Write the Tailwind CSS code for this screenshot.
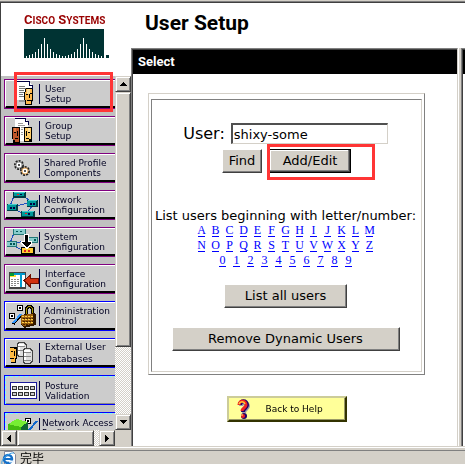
<!DOCTYPE html>
<html lang="en">
<head>
<meta charset="utf-8">
<title>User Setup</title>
<script src="https://cdn.jsdelivr.net/npm/@tailwindcss/browser@4"></script>
</head>
<body class="flex h-screen flex-col overflow-hidden bg-white font-['DejaVu_Sans',sans-serif] text-[13px] text-black">
<div class="h-px shrink-0 bg-[#d4d0c8]"></div>
<div class="flex min-h-0 flex-1 border-t border-[#808080]">
 <div class="flex min-h-0 flex-1 border-t border-[#404040]">

  <!-- Left column: logo and navigation -->
  <div class="relative flex w-[131px] shrink-0 flex-col border-l border-[#404040]">
    <div class="h-[73px] shrink-0 pt-[10px] pl-[23px]">
      <p class="font-['Roboto',sans-serif] text-[13px] leading-[14px] font-bold whitespace-nowrap text-[#990000]">C<span class="text-[10px]">ISCO</span> S<span class="text-[10px]">YSTEMS</span></p>
      <svg class="mt-px h-[29px] w-[86px]" viewBox="0 0 86 29" shape-rendering="crispEdges" aria-hidden="true">
        <path fill="#003333" d="M0 0h80v29H0zM82 26h3v3h-3z"/>
        <path stroke="#fff" d="M2.500 29v-2M5.500 29v-3M8.500 29v-4M11.500 29v-6M14.500 29v-9M17.500 29v-14M20.500 29v-20M23.500 29v-14M26.500 29v-9M29.500 29v-6M32.500 29v-4M35.500 29v-3M38.500 29v-2M41.500 29v-2M44.500 29v-3M47.500 29v-4M50.500 29v-6M53.500 29v-9M56.500 29v-14M59.500 29v-20M62.500 29v-14M65.500 29v-9M68.500 29v-6M71.500 29v-4M74.500 29v-3M77.500 29v-2"/>
      </svg>
    </div>

    <div class="flex min-h-0 flex-1">
      <nav class="flex min-w-0 flex-1 flex-col gap-[7px] overflow-hidden bg-[#c0c0c0] pt-[3px] pl-[3px] text-[9px] leading-[10px] whitespace-nowrap text-[#000022]" aria-label="Main">
        <a href="#" class="flex h-[30px] w-[124px] shrink-0 border border-[#800080]"><span class="flex flex-1 items-center border-t border-l border-white border-b-2 border-b-black bg-[#ccc]">
          <svg class="h-[26px] w-[33px] shrink-0" viewBox="0 0 33 26" shape-rendering="crispEdges" aria-hidden="true"><path fill="#999" d="M13 18h14v3H13z"/><path fill="#fff" d="M11 1h12l4 4v14H11z"/><path fill="none" stroke="#000044" d="M11 .5h12.500v4h3v3"/><path stroke="#777" d="M13 5.500h6M13 7.500h7M13 9.500h5M13 11.500h5M13 13.500h4M13 15.500h5"/><path fill="#000" d="M20 7h6v1h1v12h-1v4h-7v-5h-1v-8h1V8h1z"/><path fill="#ffb84d" d="M20 8h6v11h-1v4h-5v-4h-1v-8h1z"/><path fill="#ffdf9b" d="M21 8h3v5h-3z"/><path fill="#000" d="M20 13h2v1h-2zM24 12h2v1h-2zM23 13h1v4h-1zM21 19h4v1h-4z"/></svg>
          <span class="mr-[5px] h-5 w-px bg-[#000044]"></span><span>User<br>Setup</span></span></a>
        <a href="#" class="flex h-[30px] w-[124px] shrink-0 border border-[#800080]"><span class="flex flex-1 items-center border-t border-l border-white border-b-2 border-b-black bg-[#ccc]">
          <svg class="h-[26px] w-[33px] shrink-0" viewBox="0 0 33 26" shape-rendering="crispEdges" aria-hidden="true"><path fill="#fff" d="M9 1h10l3 3v19H9z"/><path fill="none" stroke="#000044" d="M9.500 1V.5h9.500v3h3v3"/><path stroke="#999" d="M12 5.500h5M12 7.500h7M15 9.500h3M15 11.500h2M15 14.500h2M15 16.500h2"/><path fill="#000" d="M6 9h8v16H7v-4H6zM18 9h8v15h-8z"/><path fill="#c0562a" d="M7 10h6v14H9v-2H7z"/><path fill="#e47a43" d="M8 10h2v4H8z"/><path fill="#fc6" d="M19 10h6v11h-2v2h-4z"/><path fill="#ffe3a5" d="M22 10h2v4h-2z"/><path fill="#000" d="M8 14h2v1H8zM11 13h1v5h-1zM9 20h3v1H9zM20 13h1v5h-1zM22 14h2v1h-2zM20 20h3v1h-3z"/></svg>
          <span class="mr-[5px] h-5 w-px bg-[#000044]"></span><span>Group<br>Setup</span></span></a>
        <a href="#" class="flex h-[30px] w-[124px] shrink-0 border border-[#800080]"><span class="flex flex-1 items-center border-t border-l border-white border-b-2 border-b-black bg-[#ccc]">
          <svg class="h-[26px] w-[33px] shrink-0" viewBox="0 0 33 26" aria-hidden="true"><circle cx="13" cy="10" r="4" fill="#eee" stroke="#222" stroke-width="2" stroke-dasharray="2 1"/><circle cx="13" cy="10" r="3" fill="#fff" stroke="#999"/><circle cx="13" cy="10" r="1" fill="#222"/><circle cx="19" cy="16" r="4" fill="#fc9" stroke="#222" stroke-width="2" stroke-dasharray="2 1"/><circle cx="19" cy="16" r="3" fill="#fff" stroke="#e0a860"/><circle cx="19" cy="16" r="1" fill="#222"/></svg>
          <span class="mr-1 h-5 w-px bg-[#000044]"></span><span>Shared Profile<br>Components</span></span></a>
        <a href="#" class="flex h-[30px] w-[124px] shrink-0 border border-[#800080]"><span class="flex flex-1 items-center border-t border-l border-white border-b-2 border-b-black bg-[#ccc]">
          <svg class="h-[26px] w-[33px] shrink-0" viewBox="0 0 33 26" shape-rendering="crispEdges" aria-hidden="true"><path fill="none" stroke="#2050c0" d="M8 4L4 14M17 4l9 6M9 14l14-3M8 17l10 5M26 14l-5 7"/><path fill="#003c46" d="M7 0h13v6H7zM21 8h11v7H21zM1 12h11v7H1zM15 19h14v6H15z"/><path fill="#099" d="M8 0h10v4H8zM21 9h9v5h-9zM1 13h9v5H1zM16 20h11v4H16z"/><path fill="#4cc" d="M8 0h11v1H8zM22 8h9v1h-9zM2 12h9v1H2zM16 19h12v1H16z"/><path fill="#e22" d="M11 2h2v1h-2zM19 21h2v1h-2z"/><path fill="#004" d="M14 2h2v1h-2zM24 11h2v2h-2zM27 11h2v2h-2zM4 15h2v2H4zM7 15h2v2H7zM22 21h2v2h-2z"/></svg>
          <span class="mr-1 h-5 w-px bg-[#000044]"></span><span>Network<br>Configuration</span></span></a>
        <a href="#" class="flex h-[30px] w-[124px] shrink-0 border border-[#800080]"><span class="flex flex-1 items-center border-t border-l border-white border-b-2 border-b-black bg-[#ccc]">
          <svg class="h-[26px] w-[33px] shrink-0" viewBox="0 0 33 26" shape-rendering="crispEdges" aria-hidden="true"><path fill="none" stroke="#2050c0" d="M8 4L4 14M17 4l9 6M9 14l14-3M8 17l10 5M26 14l-5 7"/><path fill="#277" d="M7 0h13v6H7zM22 8h10v6H22zM1 12h10v6H1z"/><path fill="#8cc" d="M8 0h11v5H8zM22 9h9v4h-9zM1 13h9v4H1z"/><path fill="#055" d="M10 2h2v1h-2zM14 2h2v1h-2zM28 10h2v2h-2zM4 14h2v2H4zM7 14h2v2H7z"/><path fill="#000" d="M15 18h14v8H15z"/><path fill="#fc3" d="M16 19h11v5H16z"/><path fill="#d22" d="M18 21h2v2h-2zM22 21h2v2h-2z"/><path fill="#fff" d="M18 5h5v7h3v3l-5 5-6-5v-3h3z"/><path fill="#000" d="M19 6h3v7h3v1l-4 4h-1l-4-4v-1h3z"/></svg>
          <span class="mr-1 h-5 w-px bg-[#000044]"></span><span>System<br>Configuration</span></span></a>
        <a href="#" class="flex h-[30px] w-[124px] shrink-0 border border-[#800080]"><span class="flex flex-1 items-center border-t border-l border-white border-b-2 border-b-black bg-[#ccc]">
          <svg class="h-[26px] w-[33px] shrink-0" viewBox="0 0 33 26" shape-rendering="crispEdges" aria-hidden="true"><path fill="#444" d="M3 6h17v17H3z"/><path fill="#fff" d="M4 7h15v14H4z"/><path fill="#09c" d="M8 7h11v2H8zM14 9h2v12h-2z"/><path fill="#093" d="M4 7h4v3H4z"/><path fill="#fd3" d="M4 10h6v1H4zM8 9h2v2H8z"/><path stroke="#888" stroke-dasharray="2 1" d="M5 13.500h8M5 15.500h8M5 17.500h8M5 19.500h6"/><path fill="#888" d="M21 20l2 1v-3h10v-1l-9 1z"/><path fill="#d03010" stroke="#701000" d="M18 14.500l6-5v3h8v5h-8v3z"/></svg>
          <span class="mr-[5px] h-5 w-px bg-[#000044]"></span><span>Interface<br>Configuration</span></span></a>
        <a href="#" class="flex h-[30px] w-[124px] shrink-0 border border-[#0000ff]"><span class="flex flex-1 items-center border-t border-l border-white border-b-2 border-b-black bg-[#ccc]">
          <svg class="h-[26px] w-[33px] shrink-0" viewBox="0 0 33 26" shape-rendering="crispEdges" aria-hidden="true"><path fill="#000" d="M11 2h6v6h-6zM3 10h6v6H3z"/><path fill="#fff" d="M12 3h4v4h-4zM4 11h4v4H4z"/><path fill="#000" d="M13 4h2v2h-2zM5 12h2v2H5z"/><path stroke="#000" stroke-width="3" d="M7 21l8-9"/><path stroke="#39f" stroke-width="2" d="M7 20l8-9"/><path fill="none" stroke="#000" stroke-width="3" d="M20.500 13V5.500l2-2h2l2 2V13"/><path fill="none" stroke="#a90" d="M20.500 13V5.500l2-2h2l2 2V13"/><path fill="#321800" d="M15 12l13-2 2 2v10l-12 3-3-3z"/><path fill="#9c5f0c" d="M15 12l12-1v10l-10 2-2-2z"/><path stroke="#ffcf48" stroke-dasharray="2 1" d="M16 13.500h11M16 16.500h11M16 19.500h11"/><path stroke="#4b2500" stroke-dasharray="2 1" d="M17 15.500h11M17 18.500h11M17 21.500h9"/></svg>
          <span class="mr-1 h-5 w-px bg-[#000044]"></span><span>Administration<br>Control</span></span></a>
        <a href="#" class="flex h-[30px] w-[124px] shrink-0 border border-[#0000ff]"><span class="flex flex-1 items-center border-t border-l border-white border-b-2 border-b-black bg-[#ccc] leading-[12px]">
          <svg class="h-[26px] w-[33px] shrink-0" viewBox="0 0 33 26" shape-rendering="crispEdges" aria-hidden="true"><path fill="#000" d="M4 7h7v12h-1v4H5v-4H4z"/><path fill="#fb4" d="M4 8h6v10H9v4H5v-4H4z"/><path fill="#000" d="M5 11h2v1H5zM8 11h1v5H8zM5 18h3v1H5zM8 8h2v1H8z"/><g stroke="#444"><path fill="#ddd" d="M11 4.500l2-2h5l2 2v10l-2 2h-5l-2-2z"/><path fill="#ddd" d="M17 10.500l2-2h5l2 2v11l-2 2h-5l-2-2z"/></g><path fill="#fff" d="M12 4h6v2h-6zM18 10h6v2h-6zM12 7h2v7h-2zM18 13h2v8h-2z"/><path fill="none" stroke="#888" d="M12 6.500h7M12 10.500h5M18 12.500h7M18 16.500h7M18 20.500h7"/></svg>
          <span class="mr-[5px] h-5 w-px bg-[#000044]"></span><span>External User<br>Databases</span></span></a>
        <a href="#" class="flex h-[30px] w-[124px] shrink-0 border border-[#0000ff]"><span class="flex flex-1 items-center border-t border-l border-dashed border-[#7ff] bg-[#ccc] shadow-[inset_0_-1px_0_#888]">
          <svg class="h-[26px] w-[33px] shrink-0" viewBox="0 0 33 26" shape-rendering="crispEdges" aria-hidden="true"><path fill="#fff" stroke="#1a1a99" d="M4.500 4.500h26v16h-26z"/><path fill="#ccc" d="M6 8h5v4H6zM12 8h5v4h-5zM18 8h5v4h-5zM24 8h5v4h-5zM6 14h5v4H6zM12 14h5v4h-5zM18 14h5v4h-5zM24 14h5v4h-5z"/><path fill="none" stroke="#333" d="M6.500 8.500h4v3h-4zM12.500 8.500h4v3h-4zM18.500 8.500h4v3h-4zM24.500 8.500h4v3h-4zM6.500 14.500h4v3h-4zM12.500 14.500h4v3h-4zM18.500 14.500h4v3h-4zM24.500 14.500h4v3h-4z"/></svg>
          <span class="mr-[5px] h-5 w-px bg-[#000044]"></span><span>Posture<br>Validation</span></span></a>
        <a href="#" class="flex h-[30px] w-[124px] shrink-0 border border-[#0000ff]"><span class="flex flex-1 items-center border-t border-l border-dashed border-[#7ff] bg-[#ccc]">
          <svg class="h-[26px] w-[33px] shrink-0" viewBox="0 0 33 26" shape-rendering="crispEdges" aria-hidden="true"><path fill="#000" d="M19 3h6v6h-6z"/><path fill="#fff" d="M20 4h4v4h-4z"/><path fill="#000" d="M21 5h2v2h-2z"/><path fill="#7e3" d="M2 9l9-5 11 3-7 5z"/><path fill="#4b1" d="M2 9l13 3v14H2z"/><path fill="#163" d="M15 12l7-5v12l-7 7z"/><path stroke="#16c" stroke-width="2" d="M23 15l8-9"/></svg>
          <span class="mr-[2px] h-5 w-px bg-[#000044]"></span><span>Network Access<br>Profiles</span></span></a>
      </nav>

      <div class="flex w-4 shrink-0 flex-col bg-[repeating-conic-gradient(#fff_0_25%,#d4d0c8_0_50%)] bg-size-[2px_2px]">
        <button type="button" aria-label="Scroll up" class="flex h-4 w-4 items-center justify-center border border-[#404040] border-t-[#d4d0c8] border-l-[#d4d0c8] bg-[#d4d0c8] shadow-[inset_1px_1px_0_#fff,inset_-1px_-1px_0_#808080]"><svg class="h-1 w-[7px]" viewBox="0 0 7 4" shape-rendering="crispEdges"><path d="M3 0h1v1h1v1h1v1h1v1H0V3h1V2h1V1h1z"/></svg></button>
        <div class="h-[255px] border border-[#404040] border-t-[#d4d0c8] border-l-[#d4d0c8] bg-[#d4d0c8] shadow-[inset_1px_1px_0_#fff,inset_-1px_-1px_0_#808080]"></div>
        <button type="button" aria-label="Scroll down" class="mt-auto flex h-4 w-4 items-center justify-center border border-[#404040] border-t-[#d4d0c8] border-l-[#d4d0c8] bg-[#d4d0c8] shadow-[inset_1px_1px_0_#fff,inset_-1px_-1px_0_#808080]"><svg class="h-1 w-[7px]" viewBox="0 0 7 4" shape-rendering="crispEdges"><path d="M3 4h1V3h1V2h1V1h1V0H0v1h1v1h1v1h1z"/></svg></button>
      </div>
    </div>

    <div class="flex h-4 shrink-0 bg-[#d4d0c8]">
      <div class="flex flex-1 bg-[repeating-conic-gradient(#fff_0_25%,#d4d0c8_0_50%)] bg-size-[2px_2px]">
        <button type="button" aria-label="Scroll left" class="flex h-4 w-4 items-center justify-center border border-[#404040] border-t-[#d4d0c8] border-l-[#d4d0c8] bg-[#d4d0c8] shadow-[inset_1px_1px_0_#fff,inset_-1px_-1px_0_#808080]"><svg class="h-[7px] w-1" viewBox="0 0 4 7" shape-rendering="crispEdges"><path d="M0 3h1V2h1V1h1V0h1v7H3V6H2V5H1V4H0z"/></svg></button>
        <div class="w-[77px] border border-[#404040] border-t-[#d4d0c8] border-l-[#d4d0c8] bg-[#d4d0c8] shadow-[inset_1px_1px_0_#fff,inset_-1px_-1px_0_#808080]"></div>
        <button type="button" aria-label="Scroll right" class="ml-auto flex h-4 w-4 items-center justify-center border border-[#404040] border-t-[#d4d0c8] border-l-[#d4d0c8] bg-[#d4d0c8] shadow-[inset_1px_1px_0_#fff,inset_-1px_-1px_0_#808080]"><svg class="h-[7px] w-1" viewBox="0 0 4 7" shape-rendering="crispEdges"><path d="M4 3H3V2H2V1H1V0H0v7h1V6h1V5h1V4h1z"/></svg></button>
      </div>
      <div class="w-4"></div>
    </div>

    <!-- highlight round the current entry -->
    <div class="pointer-events-none absolute top-[69px] left-[13px] h-10 w-[99px] border-3 border-[#ff3535]"></div>
  </div>

  <!-- Right column: title and frames -->
  <div class="flex min-w-0 flex-1 flex-col">
    <h1 class="h-[45px] shrink-0 pt-[6px] pl-[14px] font-['Roboto',sans-serif] text-[21px] leading-[28px] font-bold">User Setup</h1>
    <div class="flex min-h-0 flex-1">
      <main class="flex min-w-0 flex-1 border-t border-r border-l border-[#808080] border-r-[#d4d0c8]">
        <div class="flex min-w-0 flex-1 flex-col border-t border-l border-[#404040]">
          <h2 class="h-6 shrink-0 bg-black pl-[5px] font-['Roboto',sans-serif] text-[13px] leading-[24px] font-bold text-white">Select</h2>
          <div class="flex flex-col pt-[19px] pr-8 pl-[15px]">
            <form class="border border-[#808080] border-t-[#d4d0c8] border-l-[#d4d0c8] px-[2px] pt-[5px] pb-[2px]" onsubmit="return false">
              <div class="flex flex-col items-center border border-[#d4d0c8] border-t-[#808080] border-l-[#808080] pt-[23px] pr-[2px] pb-5">
                <div class="flex items-center gap-[6px]">
                  <label for="user" class="text-[16px] leading-[21px]">User:</label>
                  <input id="user" type="text" value="shixy-some" class="h-[21px] w-[157px] border-t-2 border-l-2 border-r border-b border-[#d4d0c8] border-t-[#505050] border-l-[#505050] bg-white pl-px text-[13px] leading-[16px] outline-none">
                </div>
                <div class="relative mt-[5px] ml-[2px] flex gap-[7px]">
                  <button type="button" class="h-6 w-10 border border-[#404040] border-t-white border-l-white bg-[#d4d0c8] shadow-[inset_-1px_-1px_0_#808080]">Find</button>
                  <button type="submit" class="h-6 w-[82px] border border-black bg-[#d4d0c8] shadow-[inset_-1px_-1px_0_#404040,inset_-2px_-2px_0_#808080,inset_1px_1px_0_#fff]">Add/Edit</button>
                  <div class="pointer-events-none absolute -top-[5px] left-[45px] h-9 w-[108px] border-3 border-[#ff3535]"></div>
                </div>
                <p class="mt-[35px] leading-[16px] whitespace-nowrap">List users beginning with letter/number:</p>
                <div class="flex flex-col items-center gap-[2px] font-['Liberation_Serif',serif] text-[12px] leading-[12px] text-[#0000ff] [&_a]:flex [&_a]:h-[13px] [&_a]:w-[7px] [&_a]:justify-center [&_a]:border-b [&_a]:border-[#0000ff]">
                  <div class="flex gap-[7px]"><a href="#">A</a><a href="#">B</a><a href="#">C</a><a href="#">D</a><a href="#">E</a><a href="#">F</a><a href="#">G</a><a href="#">H</a><a href="#">I</a><a href="#">J</a><a href="#">K</a><a href="#">L</a><a href="#">M</a></div>
                  <div class="flex gap-[7px]"><a href="#">N</a><a href="#">O</a><a href="#">P</a><a href="#">Q</a><a href="#">R</a><a href="#">S</a><a href="#">T</a><a href="#">U</a><a href="#">V</a><a href="#">W</a><a href="#">X</a><a href="#">Y</a><a href="#">Z</a></div>
                  <div class="flex gap-[7px]"><a href="#">0</a><a href="#">1</a><a href="#">2</a><a href="#">3</a><a href="#">4</a><a href="#">5</a><a href="#">6</a><a href="#">7</a><a href="#">8</a><a href="#">9</a></div>
                </div>
                <button type="button" class="mt-[17px] h-6 w-[123px] border border-[#404040] border-t-white border-l-white bg-[#d4d0c8] shadow-[inset_-1px_-1px_0_#808080]">List all users</button>
                <button type="button" class="mt-[19px] h-6 w-[228px] border border-[#404040] border-t-white border-l-white bg-[#d4d0c8] shadow-[inset_-1px_-1px_0_#808080]">Remove Dynamic Users</button>
              </div>
            </form>
            <a href="#" class="mt-[21px] flex h-[26px] w-[120px] items-center self-center border-2 border-[#333300] border-t-[#cc9] border-l-[#cc9] bg-[#ff9] pl-2 text-[9px] leading-[12px] shadow-[inset_-1px_-1px_0_#996]">
              <svg class="mr-4 h-[20px] w-[13px]" viewBox="0 0 13 20" aria-hidden="true"><path fill="none" stroke="#99a" stroke-width="4" d="M4 7c0-4 7-4 7 0 0 3-4 3-4 7"/><path fill="none" stroke="#206" stroke-width="4" d="M3 6c0-5 7-5 7 0 0 3-4 3-4 7"/><path fill="none" stroke="#e22" stroke-width="3" d="M2 6c0-5 7-5 7 0 0 3-4 3-4 6"/><path fill="none" stroke="#fc3" stroke-width="1.500" d="M2 5c1-3 5-3 6 0"/><circle cx="7" cy="17" r="3" fill="#206"/><circle cx="6" cy="17" r="2" fill="#e22"/><circle cx="5" cy="16" r="1" fill="#fa5"/></svg>
              Back to Help
            </a>
          </div>
        </div>
      </main>
      <div class="w-[3px] shrink-0 border-l border-white bg-[#d4d0c8]"></div>
      <aside class="flex w-1 shrink-0 border-t border-l border-[#808080]"><div class="flex-1 border-t border-l border-[#404040]"><div class="h-6 bg-black"></div></div></aside>
    </div>
  </div>
 </div>
</div>

<footer class="shrink-0 border-t border-[#d4d0c8]">
  <div class="border-t border-white bg-[#d4d0c8] pt-[2px]">
    <div class="flex h-[14px] items-start border-t border-[#808080] pl-[1px]">
      <svg class="h-[15px] w-[15px] shrink-0" viewBox="0 0 15 15" aria-hidden="true"><path fill="#fff" stroke="#889" d="M3.500.5h8l3 3v11h-11z"/><circle cx="7" cy="8" r="4" fill="none" stroke="#1670c8" stroke-width="2.500"/><path stroke="#1670c8" stroke-width="2" d="M4 8h7"/><path stroke="#e8f4ff" stroke-width="2" d="M8 10.500h5"/><path fill="none" stroke="#3aa0e8" d="M1 13C-1 9 8 1 13 2"/></svg>
      <span class="pl-1 font-['Noto_Sans_CJK_SC',sans-serif] text-[12px] leading-[13px]" lang="zh-CN">完毕</span>
    </div>
  </div>
</footer>
<script>
  const user = document.getElementById('user');
  user.focus();
  user.setSelectionRange(user.value.length, user.value.length);
</script>
</body>
</html>
